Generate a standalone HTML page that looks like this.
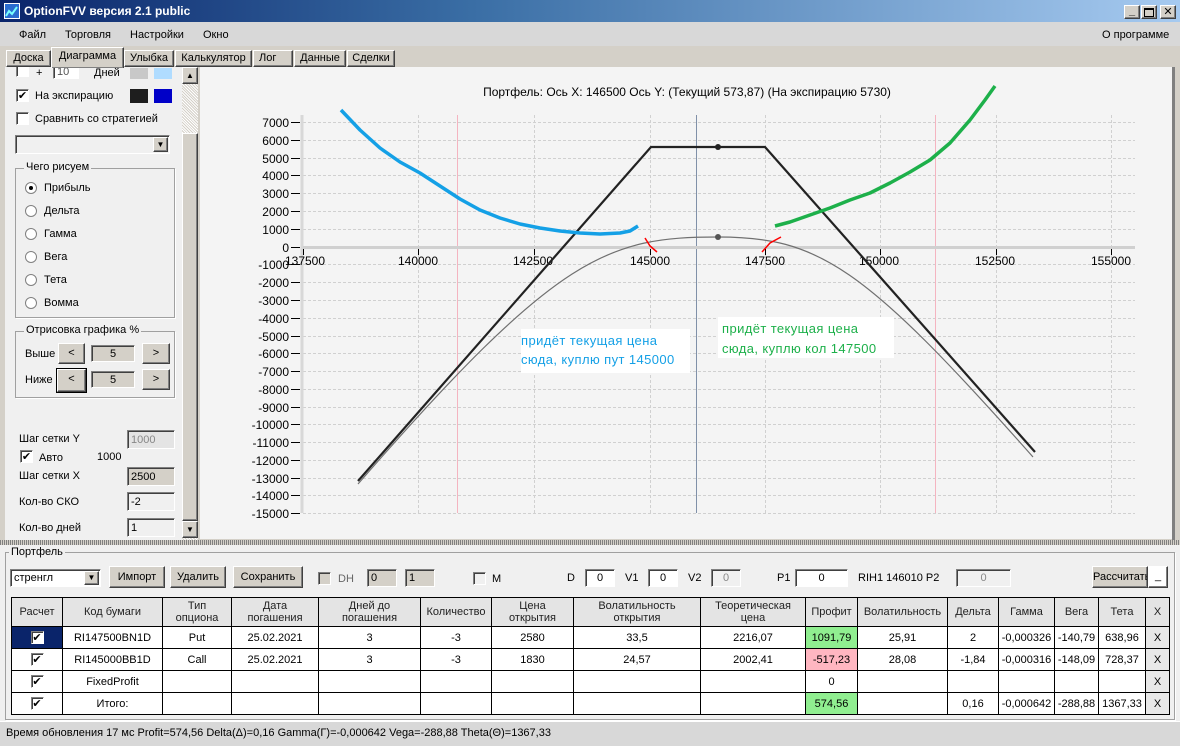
<!DOCTYPE html>
<html><head><meta charset="utf-8"><style>
*{box-sizing:border-box;margin:0;padding:0}
body{width:1180px;height:746px;position:relative;overflow:hidden;background:#d4d0c8;font-family:"Liberation Sans","DejaVu Sans",sans-serif;font-size:11px;color:#000}
.a{position:absolute;white-space:nowrap}
.btn{position:absolute;background:#d4d0c8;border:1px solid;border-color:#fff #404040 #404040 #fff;box-shadow:inset -1px -1px 0 #808080;text-align:center;font-size:11px}
.fld{position:absolute;background:#fff;border:1px solid;border-color:#808080 #fff #fff #808080;box-shadow:inset 1px 1px 0 #404040;font-size:11px;padding-left:3px;display:flex;align-items:center}
.fld.c{justify-content:center;padding-left:0}
.cb{position:absolute;width:13px;height:13px;background:#fff;border:1px solid;border-color:#808080 #fff #fff #808080;box-shadow:inset 1px 1px 0 #404040;font-size:11px;line-height:11px;text-align:center;font-weight:bold;font-family:"DejaVu Sans",sans-serif}
.rd{position:absolute;width:12px;height:12px;border-radius:50%;background:#fff;border:1px solid #808080}
.grp{position:absolute;border:1px solid #a0a0a0;box-shadow:1px 1px 0 #fff}
.gl{position:absolute;background:#f0f0f0;padding:0 2px;top:-8px;left:8px}
table{border-collapse:collapse;position:absolute;left:11px;top:597px;table-layout:fixed}
td{border:1px solid #000;text-align:center;font-size:11px;height:22px;background:#fff;overflow:hidden;white-space:nowrap}
tr.h td{background:#e4e4e4;height:29px;line-height:12px;color:#222}
td .cb{position:relative;display:inline-block;vertical-align:middle}
</style></head><body>
<div class="a" style="left:0;top:0;width:1180px;height:22px;background:linear-gradient(90deg,#0a246a 0%,#3a6ea5 40%,#a6caf0 100%)"></div>
<div class="a" style="left:4px;top:3px;width:16px;height:16px;background:#2a6cd0;border:1px solid #fff"><svg width="14" height="14"><path d="M1 12 L4 7 L7 10 L12 3" stroke="#7ff" fill="none" stroke-width="2"/></svg></div>
<div class="a" style="left:24px;top:4px;color:#fff;font-weight:bold;font-size:12px">OptionFVV версия 2.1 public</div>
<div class="btn" style="left:1124px;top:5px;width:16px;height:14px;font-weight:bold;line-height:10px">_</div>
<div class="btn" style="left:1141px;top:5px;width:16px;height:14px"><div style="margin:2px auto;width:10px;height:9px;border:1px solid #000;border-top-width:2px"></div></div>
<div class="btn" style="left:1160px;top:5px;width:16px;height:14px;font-weight:bold;line-height:12px">✕</div>
<div class="a" style="left:0;top:22px;width:1180px;height:24px;background:#d8d8d8"></div>
<div class="a" style="left:19px;top:29px">Файл</div>
<div class="a" style="left:65px;top:29px">Торговля</div>
<div class="a" style="left:130px;top:29px">Настройки</div>
<div class="a" style="left:203px;top:29px">Окно</div>
<div class="a" style="left:1102px;top:29px">О программе</div>
<div class="a" style="left:0;top:46px;width:1180px;height:21px;background:#d4d0c8"></div>
<div class="btn" style="left:6px;top:50px;width:45px;height:17px;line-height:15px">Доска</div>
<div class="btn" style="left:51px;top:47px;width:73px;height:21px;line-height:17px;border-bottom:none;z-index:2">Диаграмма</div>
<div class="btn" style="left:124px;top:50px;width:50px;height:17px;line-height:15px">Улыбка</div>
<div class="btn" style="left:175px;top:50px;width:77px;height:17px;line-height:15px">Калькулятор</div>
<div class="btn" style="left:253px;top:50px;width:40px;height:17px;line-height:15px;text-align:left;padding-left:5px">Лог</div>
<div class="btn" style="left:294px;top:50px;width:52px;height:17px;line-height:15px">Данные</div>
<div class="btn" style="left:347px;top:50px;width:48px;height:17px;line-height:15px">Сделки</div>
<div class="a" style="left:5px;top:67px;width:177px;height:473px;background:#f0f0f0;overflow:hidden">
 <div class="cb" style="left:11px;top:-3px"></div>
 <div class="a" style="left:31px;top:0">+</div>
 <div class="fld" style="left:48px;top:-3px;width:26px;height:15px;color:#555">10</div>
 <div class="a" style="left:89px;top:0">Дней</div>
 <div class="a" style="left:125px;top:1px;width:18px;height:11px;background:#c8c8c8"></div>
 <div class="a" style="left:149px;top:1px;width:18px;height:11px;background:#b0dcff"></div>
 <div class="cb" style="left:11px;top:22px">✔</div>
 <div class="a" style="left:30px;top:23px">На экспирацию</div>
 <div class="a" style="left:125px;top:22px;width:18px;height:14px;background:#1e1e1e"></div>
 <div class="a" style="left:149px;top:22px;width:18px;height:14px;background:#0000c8"></div>
 <div class="cb" style="left:11px;top:45px"></div>
 <div class="a" style="left:30px;top:46px">Сравнить со стратегией</div>
 <div class="fld" style="left:10px;top:68px;width:155px;height:19px;background:#f0f0f0"></div>
 <div class="btn" style="left:148px;top:70px;width:15px;height:15px;font-size:8px;line-height:13px">▼</div>
 <div class="grp" style="left:10px;top:101px;width:160px;height:150px"><div class="gl">Чего рисуем</div></div>
 <div class="rd" style="left:20px;top:115px"><div style="width:4px;height:4px;background:#000;border-radius:50%;margin:3px"></div></div><div class="a" style="left:39px;top:115px">Прибыль</div>
 <div class="rd" style="left:20px;top:138px"></div><div class="a" style="left:39px;top:138px">Дельта</div>
 <div class="rd" style="left:20px;top:161px"></div><div class="a" style="left:39px;top:161px">Гамма</div>
 <div class="rd" style="left:20px;top:184px"></div><div class="a" style="left:39px;top:184px">Вега</div>
 <div class="rd" style="left:20px;top:207px"></div><div class="a" style="left:39px;top:207px">Тета</div>
 <div class="rd" style="left:20px;top:230px"></div><div class="a" style="left:39px;top:230px">Вомма</div>
 <div class="grp" style="left:10px;top:264px;width:160px;height:67px"><div class="gl">Отрисовка графика %</div></div>
 <div class="a" style="left:20px;top:281px">Выше</div>
 <div class="btn" style="left:53px;top:276px;width:27px;height:21px;line-height:19px">&lt;</div>
 <div class="fld c" style="left:86px;top:278px;width:44px;height:17px;background:#d4d0c8">5</div>
 <div class="btn" style="left:137px;top:276px;width:28px;height:21px;line-height:19px">&gt;</div>
 <div class="a" style="left:20px;top:307px">Ниже</div>
 <div class="btn" style="left:52px;top:302px;width:29px;height:23px;line-height:19px;outline:1px solid #000">&lt;</div>
 <div class="fld c" style="left:86px;top:304px;width:44px;height:17px;background:#d4d0c8">5</div>
 <div class="btn" style="left:137px;top:302px;width:28px;height:21px;line-height:19px">&gt;</div>
 <div class="a" style="left:14px;top:366px">Шаг сетки Y</div>
 <div class="fld" style="left:122px;top:363px;width:48px;height:19px;background:#e4e4e4;color:#888">1000</div>
 <div class="cb" style="left:15px;top:383px">✔</div><div class="a" style="left:34px;top:385px">Авто</div><div class="a" style="left:92px;top:384px">1000</div>
 <div class="a" style="left:14px;top:403px">Шаг сетки X</div>
 <div class="fld" style="left:122px;top:400px;width:48px;height:19px;background:#d4d0c8">2500</div>
 <div class="a" style="left:14px;top:429px">Кол-во СКО</div>
 <div class="fld" style="left:122px;top:425px;width:48px;height:19px;background:#f0f0f0">-2</div>
 <div class="a" style="left:14px;top:455px">Кол-во дней</div>
 <div class="fld" style="left:122px;top:451px;width:48px;height:19px;background:#f0f0f0">1</div>
</div>
<div class="a" style="left:182px;top:67px;width:16px;height:473px;background:repeating-linear-gradient(45deg,#fff 0 1px,#d4d0c8 1px 2px)"></div>
<div class="btn" style="left:182px;top:67px;width:16px;height:17px;font-size:8px;line-height:15px">▲</div>
<div class="btn" style="left:182px;top:133px;width:16px;height:388px"></div>
<div class="btn" style="left:182px;top:521px;width:16px;height:17px;font-size:8px;line-height:15px">▼</div>
<svg class="a" style="left:200px;top:67px" width="972" height="472" viewBox="200 67 972 472">
<rect x="200" y="67" width="972" height="472" fill="#f4f4f4"/>
<g stroke="#d0d0d0" stroke-dasharray="3,2" stroke-width="1">
<path d="M303 122.5H1135M303 140.5H1135M303 158.5H1135M303 175.5H1135M303 193.5H1135M303 211.5H1135M303 229.5H1135M303 264.5H1135M303 282.5H1135M303 300.5H1135M303 318.5H1135M303 336.5H1135M303 353.5H1135M303 371.5H1135M303 389.5H1135M303 407.5H1135M303 424.5H1135M303 442.5H1135M303 460.5H1135M303 478.5H1135M303 495.5H1135M303 513.5H1135"/>
<path d="M418.5 115V513M534.5 115V513M650.5 115V513M765.5 115V513M880.5 115V513M996.5 115V513M1111.5 115V513"/>
</g>
<path d="M457.5 115V513M935.5 115V513" stroke="#f4b4c0"/>
<path d="M696.5 115V513" stroke="#8090a8"/>
<path d="M302 115V513" stroke="#d8d8d8" stroke-width="3"/>
<path d="M303 247.5H1135" stroke="#d0d0d0" stroke-width="3"/>
<g stroke="#000"><path d="M291 122.5h9M291 140.5h9M291 158.5h9M291 175.5h9M291 193.5h9M291 211.5h9M291 229.5h9M291 247.5h9M291 264.5h9M291 282.5h9M291 300.5h9M291 318.5h9M291 336.5h9M291 353.5h9M291 371.5h9M291 389.5h9M291 407.5h9M291 424.5h9M291 442.5h9M291 460.5h9M291 478.5h9M291 495.5h9M291 513.5h9"/>
<path d="M303.5 249v6M418.5 249v6M534.5 249v6M650.5 249v6M765.5 249v6M880.5 249v6M996.5 249v6M1111.5 249v6"/></g>
<g font-family="Liberation Sans,sans-serif" font-size="12" text-anchor="end" fill="#000">
<text x="289" y="127">7000</text><text x="289" y="145">6000</text><text x="289" y="163">5000</text><text x="289" y="180">4000</text><text x="289" y="198">3000</text><text x="289" y="216">2000</text><text x="289" y="234">1000</text><text x="289" y="252">0</text><text x="289" y="269">-1000</text><text x="289" y="287">-2000</text><text x="289" y="305">-3000</text><text x="289" y="323">-4000</text><text x="289" y="341">-5000</text><text x="289" y="358">-6000</text><text x="289" y="376">-7000</text><text x="289" y="394">-8000</text><text x="289" y="412">-9000</text><text x="289" y="429">-10000</text><text x="289" y="447">-11000</text><text x="289" y="465">-12000</text><text x="289" y="483">-13000</text><text x="289" y="500">-14000</text><text x="289" y="518">-15000</text>
</g>
<g font-family="Liberation Sans,sans-serif" font-size="12" text-anchor="middle">
<text x="305" y="265">137500</text><text x="418" y="265">140000</text><text x="533" y="265">142500</text><text x="650" y="265">145000</text><text x="765" y="265">147500</text><text x="879" y="265">150000</text><text x="995" y="265">152500</text><text x="1111" y="265">155000</text>
<text x="687" y="96">Портфель:  Ось X:  146500  Ось Y:   (Текущий  573,87)   (На экспирацию  5730)</text>
</g>
<path d="M358 484 C558 254 608 237 718 237 C818 237 863 265 1033 457" fill="none" stroke="#707070" stroke-width="1.2"/>
<path d="M358 481 L651 147 L765 147 L1035 452" fill="none" stroke="#222" stroke-width="2.2"/>
<circle cx="718" cy="147" r="3" fill="#222"/><circle cx="718" cy="237" r="3" fill="#555"/>
<polyline fill="none" stroke="#14a0e6" stroke-width="3.5" stroke-linejoin="round" points="341,110 360,130 380,148 400,162 420,173 440,186 460,199 480,210 500,218 520,224 540,228 560,231 580,233 600,234 620,233 630,231 638,226"/>
<polyline fill="none" stroke="#1db04a" stroke-width="3.5" stroke-linejoin="round" points="775,226 790,222 810,215 830,208 850,200 870,193 890,183 910,172 930,160 950,143 970,120 985,100 995,86"/>
<path d="M645 238 L650 246 L657 252M762 252 L770 243 L781 237" fill="none" stroke="#f00" stroke-width="1.5"/>
<rect x="521" y="329" width="169" height="44" fill="#fff"/>
<rect x="718" y="317" width="176" height="41" fill="#fff"/>
<g font-family="Liberation Sans,sans-serif" font-size="13" letter-spacing="0.4">
<text x="521" y="345" fill="#14a0e6">придёт текущая цена</text><text x="521" y="364" fill="#14a0e6">сюда, куплю пут 145000</text>
<text x="722" y="333" fill="#1db04a">придёт текущая цена</text><text x="722" y="353" fill="#1db04a">сюда, куплю кол 147500</text>
</g>
</svg>
<div class="a" style="left:1172px;top:67px;width:3px;height:473px;background:#808080"></div>
<div class="a" style="left:0;top:540px;width:1180px;height:5px;background:repeating-linear-gradient(90deg,#808080 0 1px,#d4d0c8 1px 2px)"></div>
<div class="a" style="left:0;top:545px;width:1180px;height:176px;background:#f0f0f0"></div>
<div class="grp" style="left:5px;top:552px;width:1170px;height:168px"><div class="gl" style="left:3px;top:-7px">Портфель</div></div>
<div class="fld" style="left:10px;top:569px;width:91px;height:18px">стренгл</div>
<div class="btn" style="left:84px;top:571px;width:15px;height:14px;font-size:8px;line-height:12px">▼</div>
<div class="btn" style="left:109px;top:566px;width:56px;height:22px;line-height:20px">Импорт</div>
<div class="btn" style="left:170px;top:566px;width:56px;height:22px;line-height:20px">Удалить</div>
<div class="btn" style="left:233px;top:566px;width:70px;height:22px;line-height:20px">Сохранить</div>
<div class="cb" style="left:318px;top:572px;background:#d4d0c8"></div><div class="a" style="left:338px;top:573px;color:#666">DH</div>
<div class="fld" style="left:367px;top:569px;width:30px;height:18px;background:#d4d0c8">0</div>
<div class="fld" style="left:405px;top:569px;width:30px;height:18px;background:#d4d0c8">1</div>
<div class="cb" style="left:473px;top:572px;background:#f0f0f0"></div><div class="a" style="left:492px;top:573px">M</div>
<div class="a" style="left:567px;top:572px">D</div><div class="fld c" style="left:585px;top:569px;width:30px;height:18px">0</div>
<div class="a" style="left:625px;top:572px">V1</div><div class="fld c" style="left:648px;top:569px;width:30px;height:18px">0</div>
<div class="a" style="left:688px;top:572px">V2</div><div class="fld c" style="left:711px;top:569px;width:30px;height:18px;color:#888;background:#f0f0f0">0</div>
<div class="a" style="left:777px;top:572px">P1</div><div class="fld c" style="left:795px;top:569px;width:53px;height:18px">0</div>
<div class="a" style="left:858px;top:572px">RIH1 146010  P2</div><div class="fld c" style="left:956px;top:569px;width:55px;height:18px;color:#888;background:#f0f0f0">0</div>
<div class="btn" style="left:1092px;top:566px;width:56px;height:22px;line-height:20px;overflow:hidden">Рассчитать</div>
<div class="btn" style="left:1148px;top:566px;width:20px;height:22px;line-height:18px;background:#fff">_</div>
<table>
<colgroup><col style="width:51px"><col style="width:100px"><col style="width:69px"><col style="width:87px"><col style="width:102px"><col style="width:71px"><col style="width:82px"><col style="width:127px"><col style="width:105px"><col style="width:52px"><col style="width:90px"><col style="width:51px"><col style="width:56px"><col style="width:44px"><col style="width:47px"><col style="width:24px"></colgroup>
<tr class="h"><td>Расчет</td><td>Код бумаги</td><td>Тип<br>опциона</td><td>Дата<br>погашения</td><td>Дней до<br>погашения</td><td>Количество</td><td>Цена<br>открытия</td><td>Волатильность<br>открытия</td><td>Теоретическая<br>цена</td><td>Профит</td><td>Волатильность</td><td>Дельта</td><td>Гамма</td><td>Вега</td><td>Тета</td><td>X</td></tr>
<tr><td style="background:#0a246a"><span class="cb">✔</span></td><td>RI147500BN1D</td><td>Put</td><td>25.02.2021</td><td>3</td><td>-3</td><td>2580</td><td>33,5</td><td>2216,07</td><td style="background:#90ee90">1091,79</td><td>25,91</td><td>2</td><td>-0,000326</td><td>-140,79</td><td>638,96</td><td style="background:#e8e8e8">X</td></tr>
<tr><td><span class="cb">✔</span></td><td>RI145000BB1D</td><td>Call</td><td>25.02.2021</td><td>3</td><td>-3</td><td>1830</td><td>24,57</td><td>2002,41</td><td style="background:#ffb6c1">-517,23</td><td>28,08</td><td>-1,84</td><td>-0,000316</td><td>-148,09</td><td>728,37</td><td style="background:#e8e8e8">X</td></tr>
<tr><td><span class="cb">✔</span></td><td>FixedProfit</td><td></td><td></td><td></td><td></td><td></td><td></td><td></td><td>0</td><td></td><td></td><td></td><td></td><td></td><td style="background:#e8e8e8">X</td></tr>
<tr><td><span class="cb">✔</span></td><td>Итого:</td><td></td><td></td><td></td><td></td><td></td><td></td><td></td><td style="background:#90ee90">574,56</td><td></td><td>0,16</td><td>-0,000642</td><td>-288,88</td><td>1367,33</td><td style="background:#e8e8e8">X</td></tr>
</table>
<div class="a" style="left:0;top:721px;width:1180px;height:25px;background:#d8d8d8;border-top:1px solid #fff"></div>
<div class="a" style="left:6px;top:727px">Время обновления 17 мс  Profit=574,56 Delta(Δ)=0,16 Gamma(Γ)=-0,000642 Vega=-288,88 Theta(Θ)=1367,33</div>
</body></html>
